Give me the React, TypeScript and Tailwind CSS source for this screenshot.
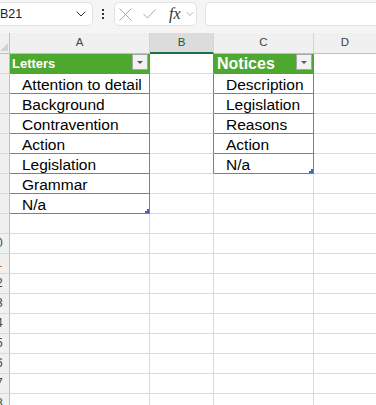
import { ChevronDown } from "lucide-react";

const letters = [
  "Attention to detail",
  "Background",
  "Contravention",
  "Action",
  "Legislation",
  "Grammar",
  "N/a",
];

const notices = ["Description", "Legislation", "Reasons", "Action", "N/a"];

function FilterButton() {
  return (
    <div className="mr-[1px] flex h-[16px] w-[16px] shrink-0 items-center justify-center self-start border border-[#a6a6a6] bg-[#f2f2f2]">
      <div className="h-0 w-0 border-x-[3px] border-t-[3px] border-x-transparent border-t-[#595959]" />
    </div>
  );
}

function ResizeHandle() {
  return (
    <>
      <div className="absolute bottom-0 right-0 h-[2px] w-[4px] bg-[#4b5fbf]" />
      <div className="absolute bottom-[2px] right-0 h-[2px] w-[2px] bg-[#4b5fbf]" />
    </>
  );
}

function BodyText({ text }: { text: string }) {
  return (
    <span className="whitespace-nowrap text-[15.5px] leading-[16px] text-black">
      {text}
    </span>
  );
}

export default function App() {
  const rows = Array.from({ length: 18 }, (_, i) => i + 1);

  return (
    <div className="h-[405px] w-[376px] overflow-hidden bg-white font-['Liberation_Sans',Arial,sans-serif]">
      {/* Name box + formula bar */}
      <div className="flex h-[33px] items-start bg-[#f5f5f5] pt-[2px]">
        <div className="-ml-[8px] flex h-[24px] w-[101px] shrink-0 items-center justify-between rounded-[5px] border border-[#e1e1e1] bg-white pl-[7px] pr-[3px]">
          <span className="text-[12.5px] text-[#222]">B21</span>
          <ChevronDown size={16} strokeWidth={1.5} className="text-[#333]" />
        </div>
        <div className="ml-[9px] mt-[7px] flex w-[3px] flex-col gap-[2px]">
          <div className="h-[2px] w-[2px] bg-[#333]" />
          <div className="h-[2px] w-[2px] bg-[#333]" />
          <div className="h-[2px] w-[2px] bg-[#333]" />
        </div>
        <div className="ml-[9px] flex h-[24px] w-[83px] shrink-0 items-center rounded-[5px] border border-[#e1e1e1] bg-white">
          <svg width="13" height="13" viewBox="0 0 13 13" className="ml-[4px] shrink-0">
            <path d="M0.5 0.5 12.5 12.5M12.5 0.5 0.5 12.5" stroke="#a8a8a8" strokeWidth="1" fill="none" />
          </svg>
          <svg width="13" height="10" viewBox="0 0 13 10" className="ml-[11px] shrink-0">
            <path d="M0.5 5 4.5 9 12.5 0.5" stroke="#a8a8a8" strokeWidth="1" fill="none" />
          </svg>
          <span className="ml-[13px] font-['Liberation_Serif',serif] text-[16px] italic leading-[16px] text-[#333]">
            fx
          </span>
          <ChevronDown size={12} strokeWidth={1.5} className="ml-[3px] shrink-0 text-[#999]" />
        </div>
        <div className="ml-[8px] h-[24px] flex-1 rounded-l-[5px] border border-r-0 border-[#e1e1e1] bg-white" />
      </div>

      {/* Sheet grid */}
      <div className="grid grid-cols-[10px_140px_64px_100px_62px]">
        {/* Column headers */}
        <div className="relative h-[21px] border-b border-r border-[#bfbfbf] bg-[#f0f0f0]">
          <svg width="8" height="8" viewBox="0 0 8 8" className="absolute bottom-[2px] right-[1px]">
            <polygon points="8,0 8,8 0,8" fill="#d2d2d2" />
          </svg>
        </div>
        <div className="flex h-[21px] items-center justify-center border-b border-r border-b-[#bfbfbf] border-r-[#d4d4d4] bg-[#f0f0f0] text-[11.5px] text-[#444]">
          A
        </div>
        <div className="flex h-[21px] items-center justify-center border-b-2 border-r border-b-[#1e7145] border-r-[#d4d4d4] bg-[#dcdcdc] pt-[1px] text-[11.5px] text-[#185c37]">
          B
        </div>
        <div className="flex h-[21px] items-center justify-center border-b border-r border-b-[#bfbfbf] border-r-[#d4d4d4] bg-[#f0f0f0] text-[11.5px] text-[#444]">
          C
        </div>
        <div className="flex h-[21px] items-center justify-center border-b border-b-[#bfbfbf] bg-[#f0f0f0] text-[11.5px] text-[#444]">
          D
        </div>

        {rows.map((r) => {
          const inLetters = r <= 8;
          const inNotices = r <= 6;
          return [
            /* Row header */
            <div
              key={`h${r}`}
              className="h-[20px] overflow-hidden border-b border-r border-b-[#d9d9d9] border-r-[#bfbfbf] bg-[#f0f0f0]"
            >
              <div
                className={`-ml-[19px] w-[30px] text-center text-[12px] leading-[19px] ${
                  r === 11 ? "text-[#c65911]" : "text-[#444]"
                }`}
              >
                {r}
              </div>
            </div>,

            /* Column A — Letters table */
            <div
              key={`a${r}`}
              className={`relative flex h-[20px] border-b border-r ${
                inLetters ? "border-[#4ea72e]" : "border-[#dadada]"
              } ${
                r === 1
                  ? "items-center justify-between bg-[#4ea72e] pl-[2px]"
                  : "items-end pl-[12px]"
              }`}
            >
              {r === 1 && (
                <>
                  <span className="pt-[1px] text-[13px] font-bold leading-[16px] text-white">
                    Letters
                  </span>
                  <FilterButton />
                </>
              )}
              {r > 1 && inLetters && <BodyText text={letters[r - 2]} />}
              {r === 8 && <ResizeHandle />}
            </div>,

            /* Column B */
            <div
              key={`b${r}`}
              className={`h-[20px] border-b border-r border-b-[#dadada] ${
                inNotices ? "border-r-[#4ea72e]" : "border-r-[#dadada]"
              }`}
            />,

            /* Column C — Notices table */
            <div
              key={`c${r}`}
              className={`relative flex h-[20px] border-b border-r ${
                inNotices ? "border-[#4ea72e]" : "border-[#dadada]"
              } ${
                r === 1
                  ? "items-center justify-between bg-[#4ea72e] pl-[3px]"
                  : "items-end pl-[12px]"
              }`}
            >
              {r === 1 && (
                <>
                  <span className="pt-[1px] text-[16px] font-bold leading-[18px] text-white">
                    Notices
                  </span>
                  <FilterButton />
                </>
              )}
              {r > 1 && inNotices && <BodyText text={notices[r - 2]} />}
              {r === 6 && <ResizeHandle />}
            </div>,

            /* Column D */
            <div key={`d${r}`} className="h-[20px] border-b border-[#dadada]" />,
          ];
        })}
      </div>
    </div>
  );
}
